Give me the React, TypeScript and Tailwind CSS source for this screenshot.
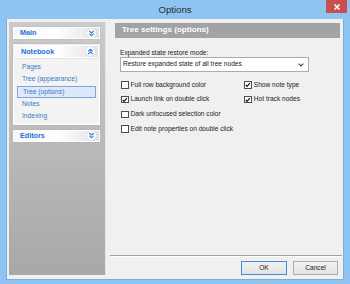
import React from "react";

const Chevrons = ({ up }: { up?: boolean }) => (
  <span className="w-[9px] h-[9px] rounded-full bg-white flex items-center justify-center shadow-[0_0_1px_#bbb]">
    <svg width="7" height="7" viewBox="0 0 7 7" className={up ? "rotate-180" : ""}>
      <path d="M1.2 1 L3.5 3 L5.8 1 M1.2 3.6 L3.5 5.6 L5.8 3.6" fill="none" stroke="#2f7fe0" strokeWidth="1.2" />
    </svg>
  </span>
);

const GroupHeader = ({ label, up, h }: { label: string; up?: boolean; h: string }) => (
  <div
    className={`${h} flex items-center justify-between pl-[6px] pr-[3px] bg-gradient-to-r from-[#f6f6f6] via-white to-[#e2e2e2] border border-white shadow-[0_0_1px_#9a9a9a]`}
  >
    <span className="text-[7.2px] font-bold text-[#1f6fd8] leading-none">{label}</span>
    <Chevrons up={up} />
  </div>
);

const Check = ({ checked, label }: { checked?: boolean; label: string }) => (
  <div className="flex items-center h-full">
    <span className="w-[7.5px] h-[7.5px] border border-[#4d4d4d] bg-white flex items-center justify-center shrink-0">
      {checked && (
        <svg width="6" height="6" viewBox="0 0 6 6">
          <path d="M0.8 3 L2.3 4.6 L5.3 0.9" fill="none" stroke="#111" strokeWidth="1.3" />
        </svg>
      )}
    </span>
    <span className="ml-[2px] text-[6.6px] text-[#222] leading-none whitespace-nowrap">{label}</span>
  </div>
);

export default function App() {
  const items = ["Pages", "Tree (appearance)", "Tree (options)", "Notes", "Indexing"];
  return (
    <div className="w-[350px] h-[284px] bg-[#8dc4f2] flex flex-col overflow-hidden font-['Liberation_Sans',Arial,sans-serif]">
      <div className="h-[19px] relative flex items-center justify-center shrink-0">
        <span className="text-[9.6px] text-[#2b2b2b] leading-none mt-[1px]">Options</span>
        <div className="absolute right-[3px] top-0 w-[21px] h-[13px] bg-[#c7504f] flex items-center justify-center">
          <svg width="6" height="6" viewBox="0 0 6 6">
            <path d="M0.5 0.5 L5.5 5.5 M5.5 0.5 L0.5 5.5" stroke="#fff" strokeWidth="1.5" />
          </svg>
        </div>
      </div>
      <div className="flex-1 mx-[6px] mb-[4px] border border-[#78aee0] border-t-0 bg-[#f0f0f0] flex">
        {/* left panel */}
        <div className="ml-[2px] mt-[3px] mb-[4px] w-[97px] bg-gradient-to-b from-[#cbcbcb] to-[#a8a8a8] pl-[4px] pr-[5px] pt-[5px] flex flex-col border-r border-[#e6e6e6]">
          <GroupHeader label="Main" h="h-[12px]" />
          <div className="mt-[5px] bg-[#f3f3f3] border border-white shadow-[0_0_1px_#9a9a9a] flex flex-col">
            <GroupHeader label="Notebook" up h="h-[13px]" />
            <div className="pt-[3px] pb-[1px] px-[3px] flex flex-col">
              {items.map((it) => (
                <div
                  key={it}
                  className={`h-[12.4px] flex items-center pl-[5px] text-[6.7px] leading-none text-[#3b78c8] ${
                    it === "Tree (options)" ? "bg-[#dde9f8] border border-[#7fa6d6] pl-[4px]" : ""
                  }`}
                >
                  {it}
                </div>
              ))}
            </div>
          </div>
          <div className="mt-[5px]">
            <GroupHeader label="Editors" h="h-[12px]" />
          </div>
        </div>
        {/* right */}
        <div className="flex-1 flex flex-col">
          <div className="mt-[4px] ml-[9px] mr-[3px] h-[15px] bg-[#a3a3a3] flex items-center pl-[7px]">
            <span className="text-[8.1px] font-bold text-white leading-none">Tree settings (options)</span>
          </div>
          <div className="ml-[14px] flex flex-col">
            <div className="mt-[11px] h-[8px] flex items-center text-[6.6px] text-[#222] leading-none">
              Expanded state restore mode:
            </div>
            <div className="w-[189px] h-[15px] border border-[#acacac] bg-white flex items-center justify-between pl-[2px] pr-[4px]">
              <span className="text-[6.6px] text-[#222] leading-none">Restore expanded state of all tree nodes</span>
              <svg width="6" height="4" viewBox="0 0 6 4">
                <path d="M0.7 0.7 L3 3 L5.3 0.7" fill="none" stroke="#444" strokeWidth="1.1" />
              </svg>
            </div>
            <div className="mt-[5.5px] ml-[1px] flex flex-col">
              <div className="h-[14.75px] grid grid-cols-[123.3px_1fr]">
                <Check label="Full row background color" />
                <Check checked label="Show note type" />
              </div>
              <div className="h-[14.75px] grid grid-cols-[123.3px_1fr]">
                <Check checked label="Launch link on double click" />
                <Check checked label="Hot track nodes" />
              </div>
              <div className="h-[14.75px] grid grid-cols-[123.3px_1fr]">
                <Check label="Dark unfocused selection color" />
              </div>
              <div className="h-[14.75px] grid grid-cols-[123.3px_1fr]">
                <Check label="Edit note properties on double click" />
              </div>
            </div>
          </div>
          <div className="flex-1" />
          <div className="ml-[4px] mr-[1px] border-t border-[#a0a0a0] border-b border-b-white" />
          <div className="mt-[4px] mb-[4px] mr-[5px] flex justify-end gap-[6px]">
            <div className="w-[46px] h-[14px] border border-[#4a8ad0] bg-gradient-to-b from-[#f2f2f2] to-[#e3e3e3] flex items-center justify-center text-[6.6px] text-[#222] leading-none">
              OK
            </div>
            <div className="w-[45px] h-[14px] border border-[#adadad] bg-gradient-to-b from-[#f2f2f2] to-[#e3e3e3] flex items-center justify-center text-[6.6px] text-[#222] leading-none">
              Cancel
            </div>
          </div>
        </div>
      </div>
    </div>
  );
}
